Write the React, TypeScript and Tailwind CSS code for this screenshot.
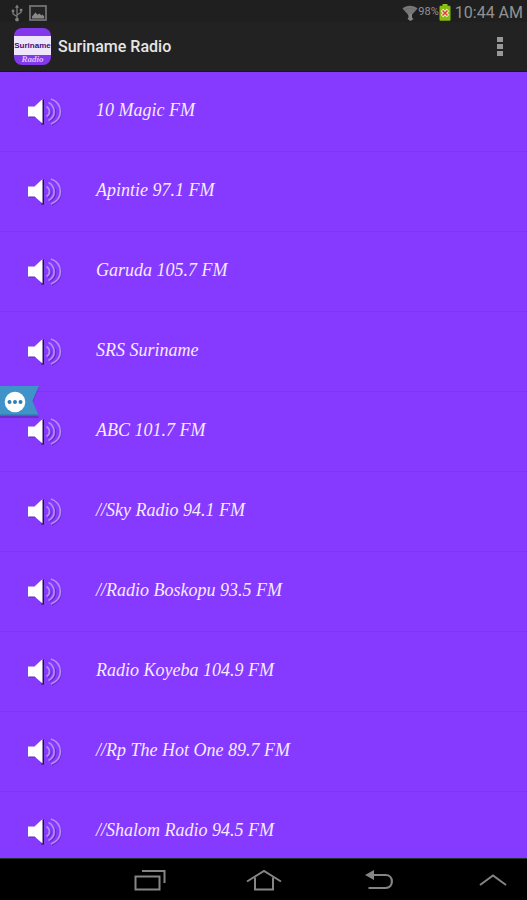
type Station = {
  id: number;
  name: string;
};

const stations: Station[] = [
  { id: 1, name: "10 Magic FM" },
  { id: 2, name: "Apintie 97.1 FM" },
  { id: 3, name: "Garuda 105.7 FM" },
  { id: 4, name: "SRS Suriname" },
  { id: 5, name: "ABC 101.7 FM" },
  { id: 6, name: "//Sky Radio 94.1 FM" },
  { id: 7, name: "//Radio Boskopu 93.5 FM" },
  { id: 8, name: "Radio Koyeba 104.9 FM" },
  { id: 9, name: "//Rp The Hot One 89.7 FM" },
  { id: 10, name: "//Shalom Radio 94.5 FM" },
];

const UsbIcon = () => (
  <svg viewBox="0 0 12 18" className="h-[18px] w-3" fill="none" stroke="#808080" strokeWidth="1.2">
    <path d="M6 3v12M6 12.5L2 10V7.5M6 11l4-2.5V6" />
    <path d="M6 0.5l2 3.3H4z" fill="#808080" stroke="none" />
    <circle cx="2" cy="7" r="1.4" fill="#808080" stroke="none" />
    <path d="M8.8 4.8h2.6v2.4H8.8z" fill="#808080" stroke="none" />
    <circle cx="6" cy="15.6" r="1.9" fill="#808080" stroke="none" />
  </svg>
);

const PictureIcon = () => (
  <svg viewBox="0 0 18 16" className="h-4 w-[18px]">
    <rect x="1" y="1" width="16" height="14" fill="#242424" stroke="#727272" strokeWidth="1.8" />
    <path d="M3 13.4v-2l3.4-3.9 2.2 2.3 1.8-1.2 2 1.9 1-.9 1.8 1.9v1.9z" fill="#8a8a8a" />
  </svg>
);

const WifiIcon = () => (
  <svg viewBox="0 0 16 18" className="h-[18px] w-4">
    <path d="M0.5 4.5C4.5 0.8 11.5 0.8 15.5 4.5L8 13z" fill="#777" />
    <path d="M3 6.2c3-2.4 7-2.4 10 0" fill="none" stroke="#666" strokeWidth="0.6" />
    <path d="M6.5 10h3.5v3.500l1.500 1.500-3 2-3-2 1-1.500z" fill="#858585" />
  </svg>
);

const BatteryIcon = () => (
  <svg viewBox="0 0 12 17" className="h-[17px] w-3">
    <rect x="3.5" width="5" height="3" rx="0.5" fill="#8fc31c" />
    <rect x="0.5" y="1.8" width="11" height="15" rx="1" fill="#86bd12" />
    <path d="M3 6l6 6M9 6l-6 6" stroke="#f4f4d8" strokeWidth="3.2" />
    <path d="M3.5 6.500l5 5M8.5 6.500l-5 5" stroke="#e2402c" strokeWidth="1.6" />
  </svg>
);

const AppLogo = () => (
  <div className="flex h-[37px] w-[37px] flex-col items-center overflow-hidden rounded-lg bg-[#8438ec]">
    <div className="mt-2 flex h-[19px] w-full items-center justify-center bg-[#eee6fa] font-['Liberation_Sans',sans-serif] text-[8px] font-bold text-[#401080]">
      Suriname
    </div>
    <div className="font-['Liberation_Serif',serif] text-[9px] leading-[9px] font-bold text-[#d9c2fa] italic">
      Radio
    </div>
  </div>
);

const SpeakerIcon = () => (
  <svg viewBox="0 0 38 30" className="h-[30px] w-[38px] shrink-0" fill="none">
    <path d="M3 9.5h6.5L18 2.5v25l-8.5-7H3z" fill="#3b1a78" opacity="0.6" />
    <path d="M15.5 2.5H18v25h-2.5z" fill="#25104e" />
    <path d="M2 9.5h6.5l8-7.5v24.5l-8-7H2z" fill="#fff" />
    <g stroke="#6a2cc8" strokeWidth="1.4">
      <path d="M22 10.5c4 2.5 4 7.5 0 10" />
      <path d="M24 6.5c7.5 4 7.5 14 0 18" />
      <path d="M26 3c12 5 12 20 0 25" />
    </g>
    <g stroke="#b58af9" strokeWidth="1.7">
      <path d="M20.5 9.5c4 2.5 4 7.5 0 10" />
      <path d="M22.5 5.5c7.5 4 7.5 14 0 18" />
      <path d="M25 2c12.5 5 12.5 20 0 25" />
    </g>
  </svg>
);

const StatusBar = () => (
  <div className="flex h-[22px] shrink-0 items-center justify-between bg-[#1f1f1f] pr-1 pl-[11px] font-[Roboto,sans-serif] text-[#929292]">
    <div className="flex items-center gap-[6px] pt-1">
      <UsbIcon />
      <PictureIcon />
    </div>
    <div className="flex items-center pt-[3px]">
      <WifiIcon />
      <span className="text-[11px]">98%</span>
      <BatteryIcon />
      <span className="ml-1 text-base leading-5">10:44 AM</span>
    </div>
  </div>
);

const ActionBar = () => (
  <header className="flex h-[50px] shrink-0 items-center border-b border-[#1c1426] bg-[#222] pr-4 pl-[14px]">
    <AppLogo />
    <h1 className="ml-[7px] flex-1 font-[Roboto,sans-serif] text-base font-medium text-[#e6e6e6]">
      Suriname Radio
    </h1>
    <button type="button" aria-label="More options" className="flex flex-col gap-[2px] p-2">
      <span className="h-[5px] w-[6px] bg-[#989898]" />
      <span className="h-[5px] w-[6px] bg-[#989898]" />
      <span className="h-[5px] w-[6px] bg-[#989898]" />
    </button>
  </header>
);

const StationRow = ({ station }: { station: Station }) => (
  <li className="border-b border-[#7f35ee]">
    <button type="button" className="flex h-[79px] w-full items-center pl-[26px] text-left">
      <SpeakerIcon />
      <span className="ml-8 pb-1 font-['Liberation_Serif',serif] text-lg text-[#f4ebff] italic">
        {station.name}
      </span>
    </button>
  </li>
);

const SideTab = () => (
  <button type="button" aria-label="Open panel" className="absolute top-[313px] left-0">
    <svg viewBox="0 0 40 34" className="h-[34px] w-10">
      <path d="M0 2h39l-6 15 6 16H0z" fill="#4b2890" opacity="0.5" />
      <path d="M0 1h39l-6.5 15L39 31H0z" fill="#3f93c8" />
      <path d="M0 29.5h38.4L39 31H0z" fill="#2f74a6" />
      <circle cx="15" cy="17" r="10.3" fill="#fff" />
      <circle cx="9.5" cy="17" r="2" fill="#2a7fb4" />
      <circle cx="15" cy="17" r="2" fill="#2a7fb4" />
      <circle cx="20.5" cy="17" r="2" fill="#2a7fb4" />
    </svg>
  </button>
);

const navButtonClass = "flex h-full w-16 items-center justify-center";

const NavigationBar = () => (
  <nav className="flex h-[42px] shrink-0 items-center justify-between border-t border-[#20332f] bg-black pr-[2px] pl-[118px]">
    <button type="button" aria-label="Recent apps" className={navButtonClass}>
      <svg viewBox="0 0 32 22" className="h-[22px] w-8" fill="none" stroke="#858585" strokeWidth="2">
        <path d="M1.5 7.5h24v13h-24z" />
        <path d="M8 2h22.5v12" />
      </svg>
    </button>
    <button type="button" aria-label="Home" className={navButtonClass}>
      <svg viewBox="0 0 36 22" className="h-[22px] w-9" fill="none" stroke="#858585" strokeWidth="2">
        <path d="M1 12.5L18 2l17 10.5" />
        <path d="M9 8.5v12h18v-12" />
      </svg>
    </button>
    <button type="button" aria-label="Back" className={navButtonClass}>
      <svg viewBox="0 0 30 22" className="h-[22px] w-[30px]" fill="none" stroke="#858585" strokeWidth="2.2">
        <path d="M8 6h13.5c8.5 0 8.5 13 0 13h-17" />
        <path d="M1 6l9-5v10z" fill="#858585" stroke="none" />
      </svg>
    </button>
    <button type="button" aria-label="Expand" className={navButtonClass}>
      <svg viewBox="0 0 28 14" className="h-[14px] w-7" fill="none" stroke="#858585" strokeWidth="2">
        <path d="M1 12L14 2.5 27 12" />
      </svg>
    </button>
  </nav>
);

export default function App() {
  return (
    <div className="flex h-screen flex-col bg-[#8639ff]">
      <StatusBar />
      <ActionBar />
      <main className="relative min-h-0 flex-1">
        <ul className="h-full overflow-y-auto [scrollbar-width:none]">
          {stations.map((station) => (
            <StationRow key={station.id} station={station} />
          ))}
        </ul>
        <SideTab />
      </main>
      <NavigationBar />
    </div>
  );
}
